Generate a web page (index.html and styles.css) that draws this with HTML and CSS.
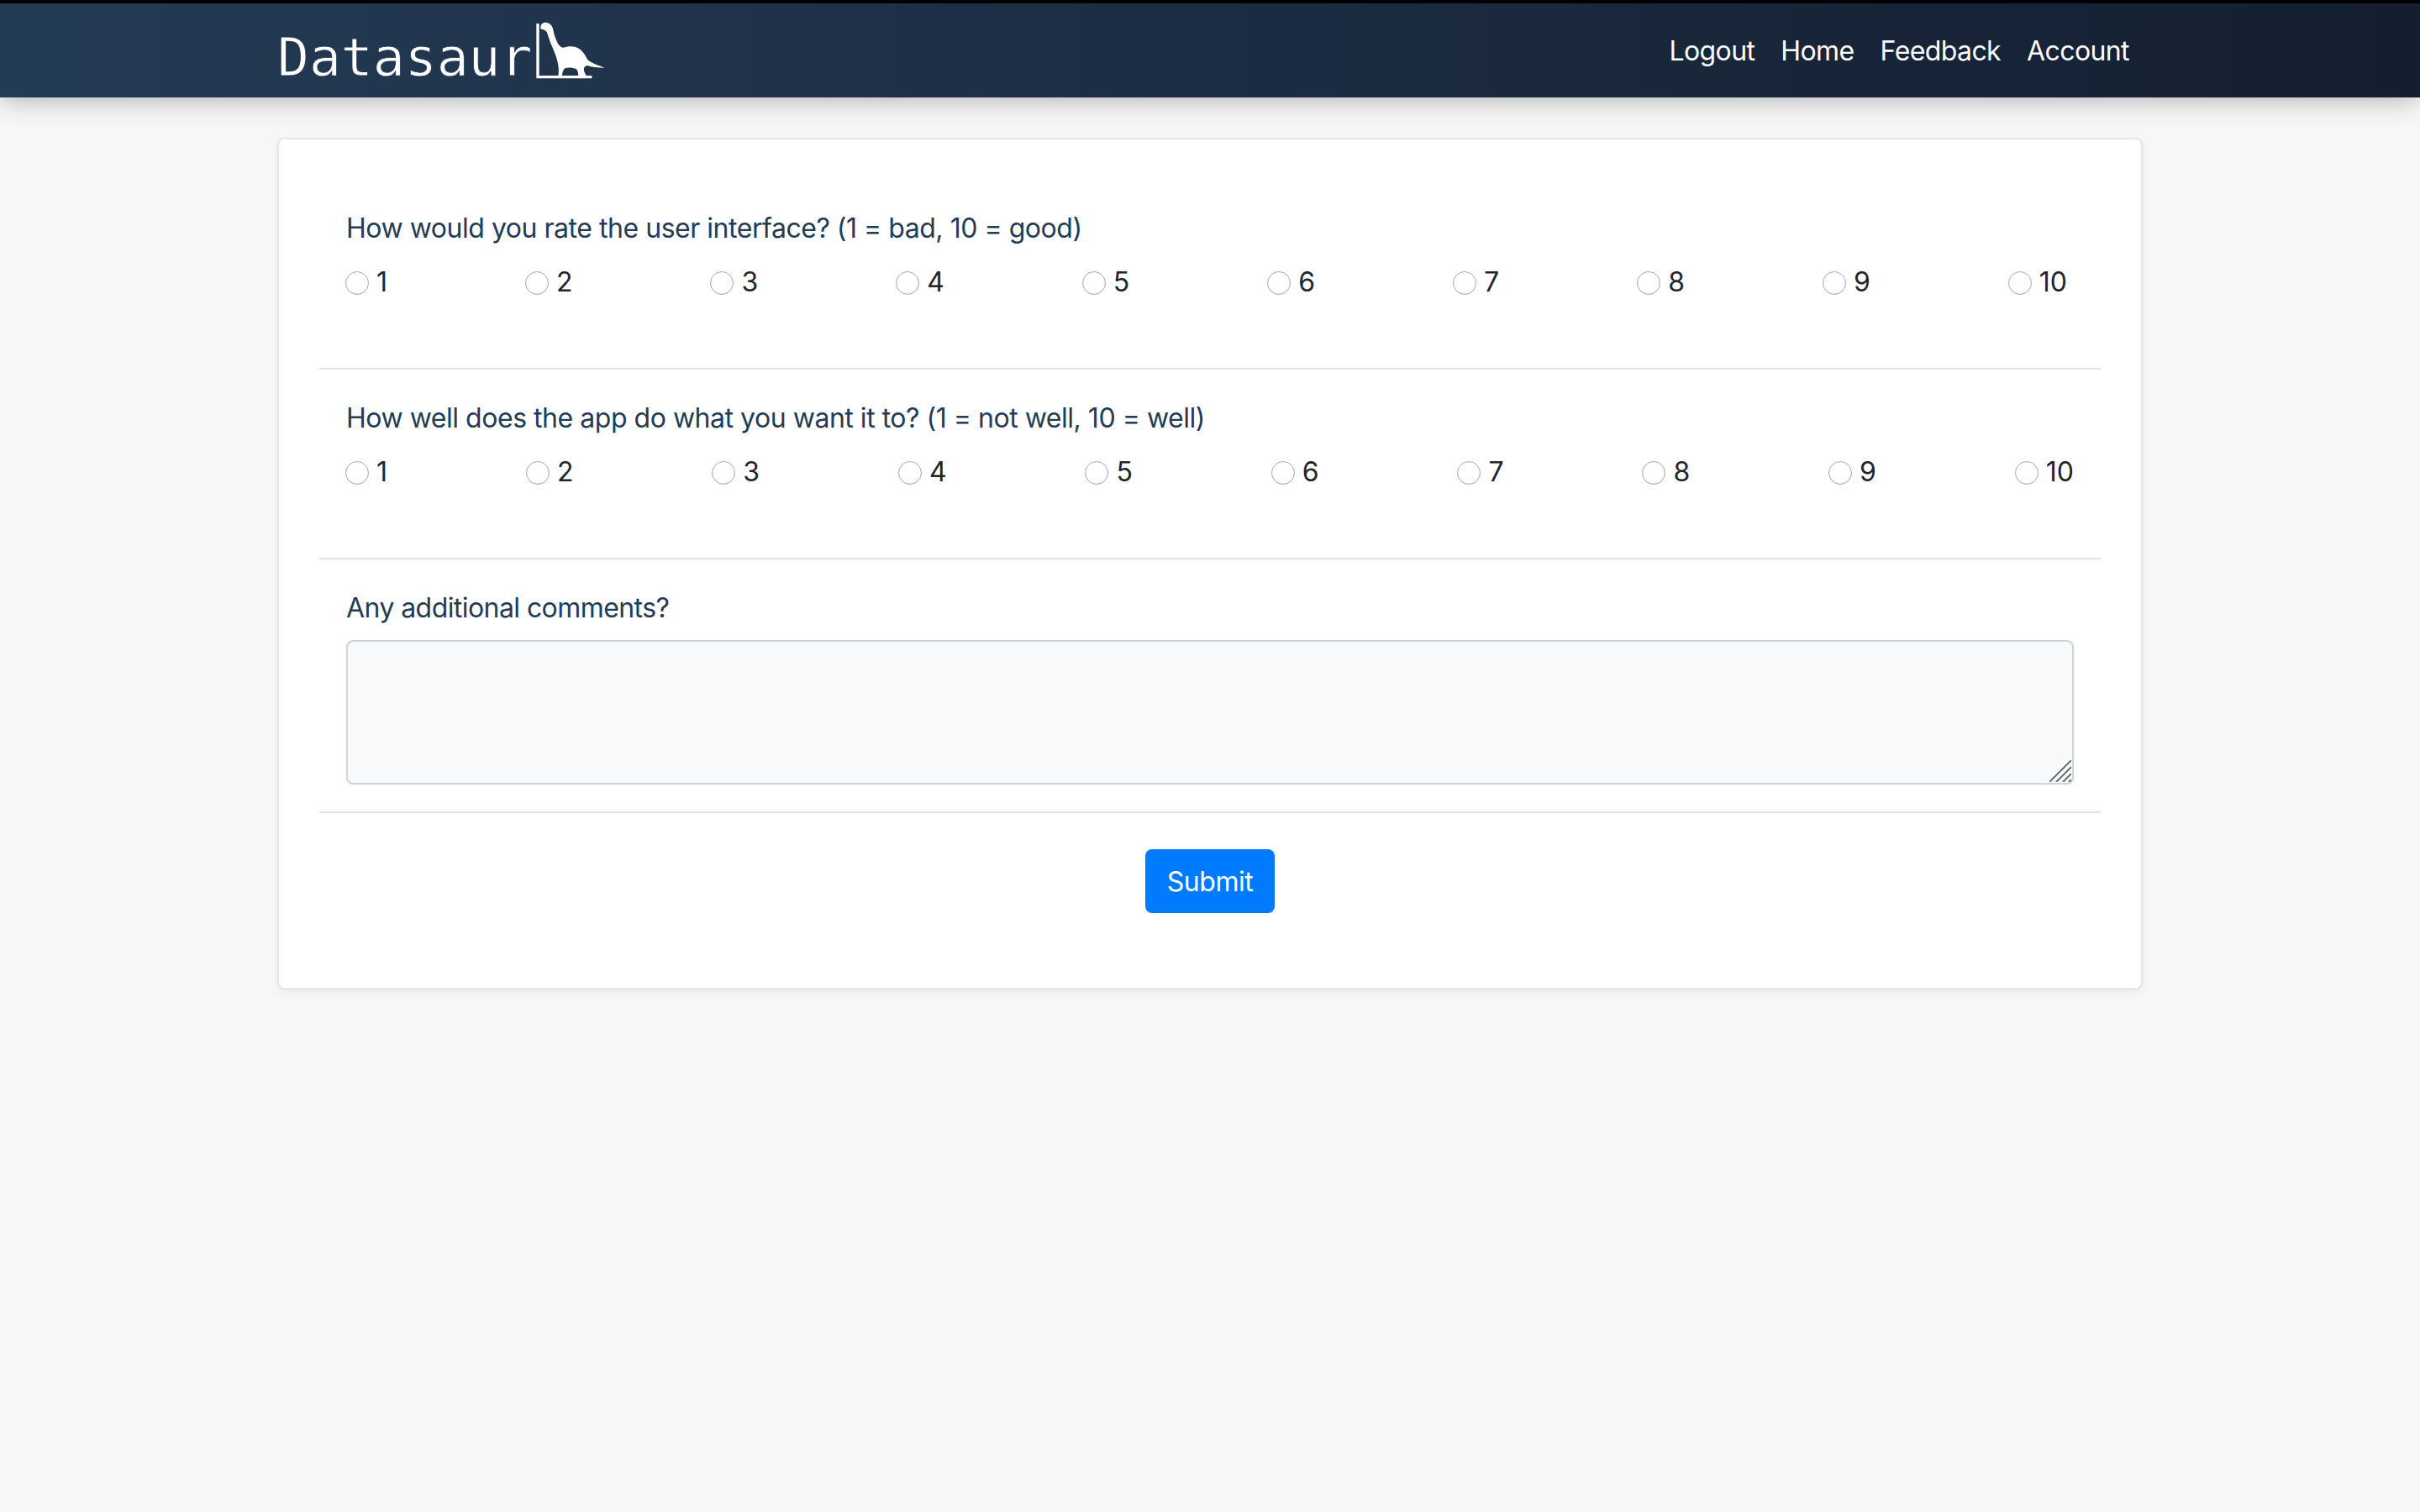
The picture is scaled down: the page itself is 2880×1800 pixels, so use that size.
FILE: index.html

```html
<!DOCTYPE html>
<html lang="en">
<head>
  <meta charset="UTF-8">
  <title>Datasaur - Feedback</title>
  <link rel="stylesheet" href="styles.css">
</head>
<body>

  <nav class="navbar">
    <div class="navbar-inner">
      <a class="brand" href="#">
        <span class="brand-name">Datasaur</span>
        <svg class="brand-logo" viewBox="0 0 270 240" width="90" height="80">
          <path fill="#fff" d="M22 24h10v186h188v10H22z"/>
          <path fill="#fff" d="M37 36C38 26 46 19 55 20C68 21 78 29 81 42C84 56 87 72 96 90C102 102 110 110 118 110C130 106 148 103 162 108C180 114 194 130 204 152C216 164 240 172 266 182C240 182 220 180 204 174C194 176 190 182 192 192C194 200 198 206 201 212H172C172 202 170 192 164 186C150 180 134 180 124 184C116 192 114 202 114 212H100C102 200 102 186 100 174C98 156 90 134 78 106C70 90 66 72 60 56C56 47 46 45 38 44z"/>
        </svg>
      </a>
      <div class="nav-links">
        <a href="#">Logout</a>
        <a href="#">Home</a>
        <a href="#">Feedback</a>
        <a href="#">Account</a>
      </div>
    </div>
  </nav>

  <form class="card">
    <div class="question">
      <label class="question-label">How would you rate the user interface? (1 = bad, 10 = good)</label>
      <div class="scale scale-short">
        <label class="scale-item"><input type="radio" name="ui" value="1">1</label>
        <label class="scale-item"><input type="radio" name="ui" value="2">2</label>
        <label class="scale-item"><input type="radio" name="ui" value="3">3</label>
        <label class="scale-item"><input type="radio" name="ui" value="4">4</label>
        <label class="scale-item"><input type="radio" name="ui" value="5">5</label>
        <label class="scale-item"><input type="radio" name="ui" value="6">6</label>
        <label class="scale-item"><input type="radio" name="ui" value="7">7</label>
        <label class="scale-item"><input type="radio" name="ui" value="8">8</label>
        <label class="scale-item"><input type="radio" name="ui" value="9">9</label>
        <label class="scale-item"><input type="radio" name="ui" value="10">10</label>
      </div>
    </div>

    <div class="question">
      <label class="question-label">How well does the app do what you want it to? (1 = not well, 10 = well)</label>
      <div class="scale">
        <label class="scale-item"><input type="radio" name="fit" value="1">1</label>
        <label class="scale-item"><input type="radio" name="fit" value="2">2</label>
        <label class="scale-item"><input type="radio" name="fit" value="3">3</label>
        <label class="scale-item"><input type="radio" name="fit" value="4">4</label>
        <label class="scale-item"><input type="radio" name="fit" value="5">5</label>
        <label class="scale-item"><input type="radio" name="fit" value="6">6</label>
        <label class="scale-item"><input type="radio" name="fit" value="7">7</label>
        <label class="scale-item"><input type="radio" name="fit" value="8">8</label>
        <label class="scale-item"><input type="radio" name="fit" value="9">9</label>
        <label class="scale-item"><input type="radio" name="fit" value="10">10</label>
      </div>
    </div>

    <div class="question question-comments">
      <label class="question-label" for="comments">Any additional comments?</label>
      <div class="comments-wrap">
        <textarea id="comments" class="comments"></textarea>
        <svg class="grip" viewBox="0 0 26 26" width="26" height="26">
          <path stroke="#707070" stroke-width="2" fill="none" d="M0 26L26 0M8 26L26 8M16 26L26 16M23 26L26 23"/>
        </svg>
      </div>
    </div>

    <div class="actions">
      <button type="submit" class="submit">Submit</button>
    </div>
  </form>

</body>
</html>
```

FILE: styles.css

```css
* {
  box-sizing: border-box;
}
body {
  margin: 0;
  min-height: 100vh;
  background-color: #f7f7f7;
  font-family: "Inter", "Liberation Sans", sans-serif;
  font-size: 32px;
  line-height: 48px;
  letter-spacing: -0.47px;
  color: #212529;
}
.navbar {
  height: 116px;
  border-top: 4px solid #000;
  background: linear-gradient(to right, #243b55, #141e30);
  box-shadow: 0 6px 28px -2px rgba(0,0,0,0.28);
}
.navbar-inner {
  width: 2220px;
  height: 112px;
  margin: 0 auto;
  display: flex;
  justify-content: space-between;
  align-items: center;
}
.brand {
  display: flex;
  align-items: center;
  color: #fff;
  text-decoration: none;
}
.brand-name {
  font-family: "DejaVu Sans Mono", monospace;
  font-size: 63px;
  line-height: 80px;
  letter-spacing: 0;
  padding-top: 18px;
  -webkit-text-stroke: 0.8px #223850;
}
.brand-logo {
  margin-left: -2px;
}
.nav-links {
  display: flex;
  gap: 31px;
  padding: 2px 16px 0 0;
  letter-spacing: -0.6px;
}
.nav-links a {
  color: #fff;
  text-decoration: none;
}
.card {
  width: 2220px;
  margin: 48px auto 0;
  padding: 48px 48px 89px;
  background: #fff;
  border: 2px solid #e3e6ec;
  border-radius: 8px;
  box-shadow: 0 4px 10px rgba(0,0,0,0.05);
}
.question {
  padding: 32px 32px 78px;
  border-bottom: 2px solid #dfe3e8;
}
.question-comments {
  padding-bottom: 32px;
}
.question-label {
  display: block;
  padding-top: 2px;
  margin-bottom: 14px;
  color: #243b55;
}
.question-comments .question-label {
  letter-spacing: -0.57px;
}
.scale {
  display: flex;
  justify-content: space-between;
  padding-top: 2px;
}
.scale-short {
  padding-right: 8px;
}
.scale-item {
  display: flex;
  align-items: center;
  gap: 9px;
  letter-spacing: 0;
}
.scale-item input {
  appearance: none;
  width: 28px;
  height: 28px;
  margin: 2px 0 0 -1px;
  background: #fff;
  border: 1.5px solid #aaa;
  border-radius: 50%;
  box-shadow: inset 0 -1px 1px rgba(0,0,0,0.08);
}
.comments-wrap {
  position: relative;
  height: 172px;
}
.comments {
  display: block;
  width: 100%;
  height: 100%;
  background: #f7f9fb;
  border: 2px solid #ced4da;
  border-radius: 8px;
  resize: none;
}
.grip {
  position: absolute;
  right: 3px;
  bottom: 3px;
}
.actions {
  display: flex;
  justify-content: center;
  padding-top: 43px;
}
.submit {
  width: 154px;
  height: 76px;
  padding: 2px 0 0;
  background-color: #007bff;
  color: #fff;
  border: none;
  border-radius: 8px;
  font: inherit;
  letter-spacing: -0.47px;
  cursor: pointer;
}
```
